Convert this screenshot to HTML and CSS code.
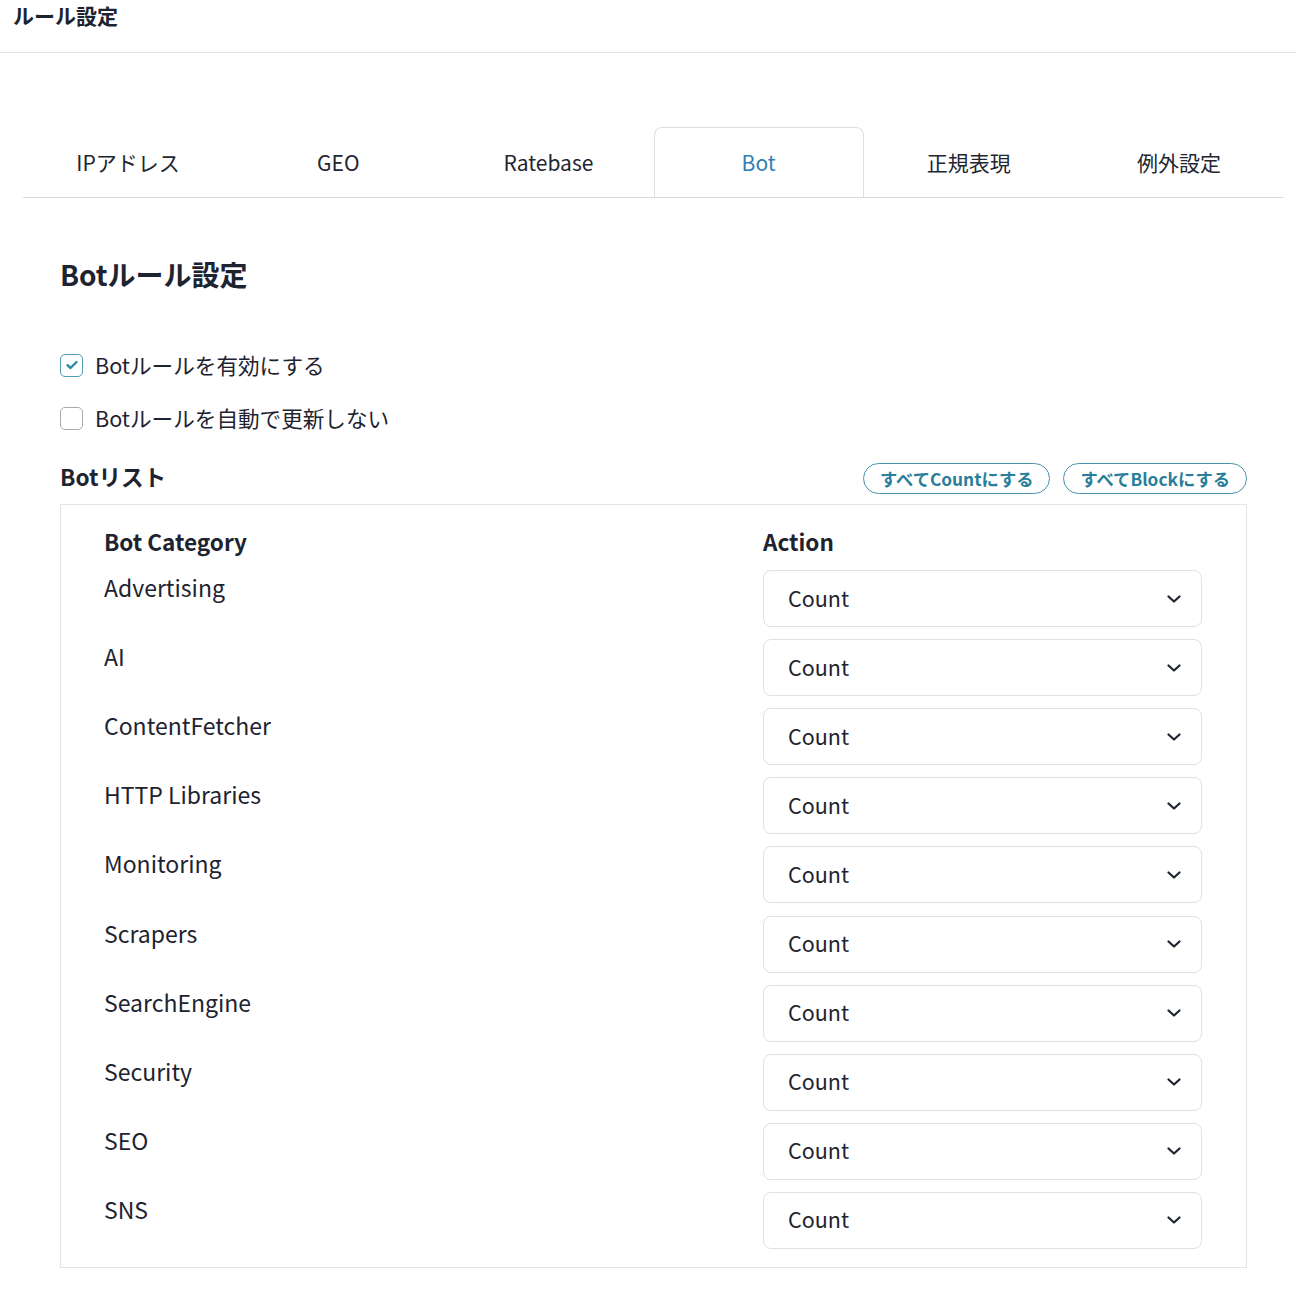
FILE: index.html
```html
<!DOCTYPE html>
<html lang="ja">
<head>
<meta charset="utf-8">
<title>ルール設定</title>
<link rel="stylesheet" href="styles.css">
</head>
<body>
<header class="page-header">
  <h1 class="page-title">ルール設定</h1>
</header>

<nav class="tabs">
  <div class="tab">IPアドレス</div>
  <div class="tab">GEO</div>
  <div class="tab">Ratebase</div>
  <div class="tab tab-active">Bot</div>
  <div class="tab">正規表現</div>
  <div class="tab">例外設定</div>
</nav>

<main class="content">
  <h2 class="section-title">Botルール設定</h2>

  <label class="check-row">
    <span class="checkbox checked">
      <svg viewBox="0 0 12 10" width="12" height="10"><path d="M1.5 5.2 L4.5 8 L10.5 2" fill="none" stroke="#2e88a4" stroke-width="2.4" stroke-linecap="round" stroke-linejoin="round"/></svg>
    </span>
    <span class="check-label">Botルールを有効にする</span>
  </label>
  <label class="check-row">
    <span class="checkbox"></span>
    <span class="check-label">Botルールを自動で更新しない</span>
  </label>

  <div class="list-head">
    <h3 class="list-title">Botリスト</h3>
    <div class="list-actions">
      <button class="pill">すべてCountにする</button>
      <button class="pill">すべてBlockにする</button>
    </div>
  </div>

  <div class="bot-table">
    <div class="th">Bot Category</div>
    <div class="th">Action</div>

    <div class="cat">Advertising</div>
    <div class="select"><span>Count</span><svg class="chev" viewBox="0 0 14 8" width="14" height="8"><path d="M1.5 1.5 L7 6.5 L12.5 1.5" fill="none" stroke="#1e2330" stroke-width="2.2" stroke-linecap="round" stroke-linejoin="round"/></svg></div>

    <div class="cat">AI</div>
    <div class="select"><span>Count</span><svg class="chev" viewBox="0 0 14 8" width="14" height="8"><path d="M1.5 1.5 L7 6.5 L12.5 1.5" fill="none" stroke="#1e2330" stroke-width="2.2" stroke-linecap="round" stroke-linejoin="round"/></svg></div>

    <div class="cat">ContentFetcher</div>
    <div class="select"><span>Count</span><svg class="chev" viewBox="0 0 14 8" width="14" height="8"><path d="M1.5 1.5 L7 6.5 L12.5 1.5" fill="none" stroke="#1e2330" stroke-width="2.2" stroke-linecap="round" stroke-linejoin="round"/></svg></div>

    <div class="cat">HTTP Libraries</div>
    <div class="select"><span>Count</span><svg class="chev" viewBox="0 0 14 8" width="14" height="8"><path d="M1.5 1.5 L7 6.5 L12.5 1.5" fill="none" stroke="#1e2330" stroke-width="2.2" stroke-linecap="round" stroke-linejoin="round"/></svg></div>

    <div class="cat">Monitoring</div>
    <div class="select"><span>Count</span><svg class="chev" viewBox="0 0 14 8" width="14" height="8"><path d="M1.5 1.5 L7 6.5 L12.5 1.5" fill="none" stroke="#1e2330" stroke-width="2.2" stroke-linecap="round" stroke-linejoin="round"/></svg></div>

    <div class="cat">Scrapers</div>
    <div class="select"><span>Count</span><svg class="chev" viewBox="0 0 14 8" width="14" height="8"><path d="M1.5 1.5 L7 6.5 L12.5 1.5" fill="none" stroke="#1e2330" stroke-width="2.2" stroke-linecap="round" stroke-linejoin="round"/></svg></div>

    <div class="cat">SearchEngine</div>
    <div class="select"><span>Count</span><svg class="chev" viewBox="0 0 14 8" width="14" height="8"><path d="M1.5 1.5 L7 6.5 L12.5 1.5" fill="none" stroke="#1e2330" stroke-width="2.2" stroke-linecap="round" stroke-linejoin="round"/></svg></div>

    <div class="cat">Security</div>
    <div class="select"><span>Count</span><svg class="chev" viewBox="0 0 14 8" width="14" height="8"><path d="M1.5 1.5 L7 6.5 L12.5 1.5" fill="none" stroke="#1e2330" stroke-width="2.2" stroke-linecap="round" stroke-linejoin="round"/></svg></div>

    <div class="cat">SEO</div>
    <div class="select"><span>Count</span><svg class="chev" viewBox="0 0 14 8" width="14" height="8"><path d="M1.5 1.5 L7 6.5 L12.5 1.5" fill="none" stroke="#1e2330" stroke-width="2.2" stroke-linecap="round" stroke-linejoin="round"/></svg></div>

    <div class="cat">SNS</div>
    <div class="select"><span>Count</span><svg class="chev" viewBox="0 0 14 8" width="14" height="8"><path d="M1.5 1.5 L7 6.5 L12.5 1.5" fill="none" stroke="#1e2330" stroke-width="2.2" stroke-linecap="round" stroke-linejoin="round"/></svg></div>
  </div>
</main>
</body>
</html>
```

FILE: styles.css
```css
* { box-sizing: border-box; }
html, body { margin: 0; padding: 0; background: #fff; }
body {
  font-family: "Noto Sans CJK JP", "Noto Sans", sans-serif;
  color: #1e2330;
}

.page-header {
  padding: 0 13px;
  height: 53px;
  border-bottom: 1px solid #e2e2e2;
}
.page-title {
  margin: 0;
  font-size: 21px;
  line-height: 30px;
  font-weight: 700;
}

.tabs {
  display: flex;
  margin: 74px 12px 0 23px;
  border-bottom: 1px solid #d9d9d9;
}
.tab {
  flex: 1 1 0;
  min-width: 0;
  height: 70px;
  padding-bottom: 2px;
  display: flex;
  align-items: center;
  justify-content: center;
  font-size: 21px;
  color: #222630;
  border: 1px solid transparent;
  border-bottom: none;
}
.tab-active {
  color: #2f7fb5;
  border-color: #dedede;
  border-radius: 8px 8px 0 0;
}

.content {
  padding: 0 49px 0 60px;
}
.section-title {
  margin: 56px 0 0 0;
  font-size: 28px;
  line-height: 40px;
  font-weight: 700;
}

.check-row {
  display: flex;
  align-items: center;
  gap: 12px;
  height: 32px;
}
.check-row:first-of-type { margin-top: 55px; }
.check-row + .check-row { margin-top: 21px; }
.checkbox {
  width: 23px;
  height: 23px;
  border: 1.5px solid #a9aaae;
  border-radius: 5px;
  display: flex;
  align-items: center;
  justify-content: center;
}
.checkbox.checked { border-color: #4e9db5; }
.check-label {
  font-size: 21.6px;
  line-height: 32px;
}

.list-head {
  display: flex;
  align-items: center;
  justify-content: space-between;
  margin-top: 29px;
  height: 31px;
}
.list-title {
  margin: 0 0 3px 0;
  font-size: 22.6px;
  font-weight: 700;
  line-height: 32px;
}
.list-actions {
  display: flex;
  gap: 13px;
}
.pill {
  font-family: inherit;
  background: #fff;
  border: 1.5px solid #4a93ac;
  border-radius: 16px;
  color: #2a7e9a;
  font-size: 17.3px;
  font-weight: 700;
  height: 31px;
  padding: 0 16px;
  line-height: 28px;
  cursor: pointer;
}

.bot-table {
  margin-top: 10px;
  border: 1px solid #e4e4e4;
  display: grid;
  grid-template-columns: 658px 1fr;
  row-gap: 12.1px;
  padding: 20px 44px 18px 43px;
}
.th {
  font-size: 22.5px;
  font-weight: 700;
  line-height: 33px;
}
.th + .th { margin-left: 1px; }
.cat {
  font-size: 23px;
  line-height: 32px;
  padding-top: 1px;
  height: 57px;
}
.select {
  margin-left: 1px;
  height: 57px;
  border: 1px solid #e0e0e0;
  border-radius: 8px;
  display: flex;
  align-items: center;
  justify-content: space-between;
  padding: 0 20px 2px 24px;
  font-size: 21.5px;
}
.select span { line-height: 32px; }
.chev { display: block; margin-top: 2px; }
```
